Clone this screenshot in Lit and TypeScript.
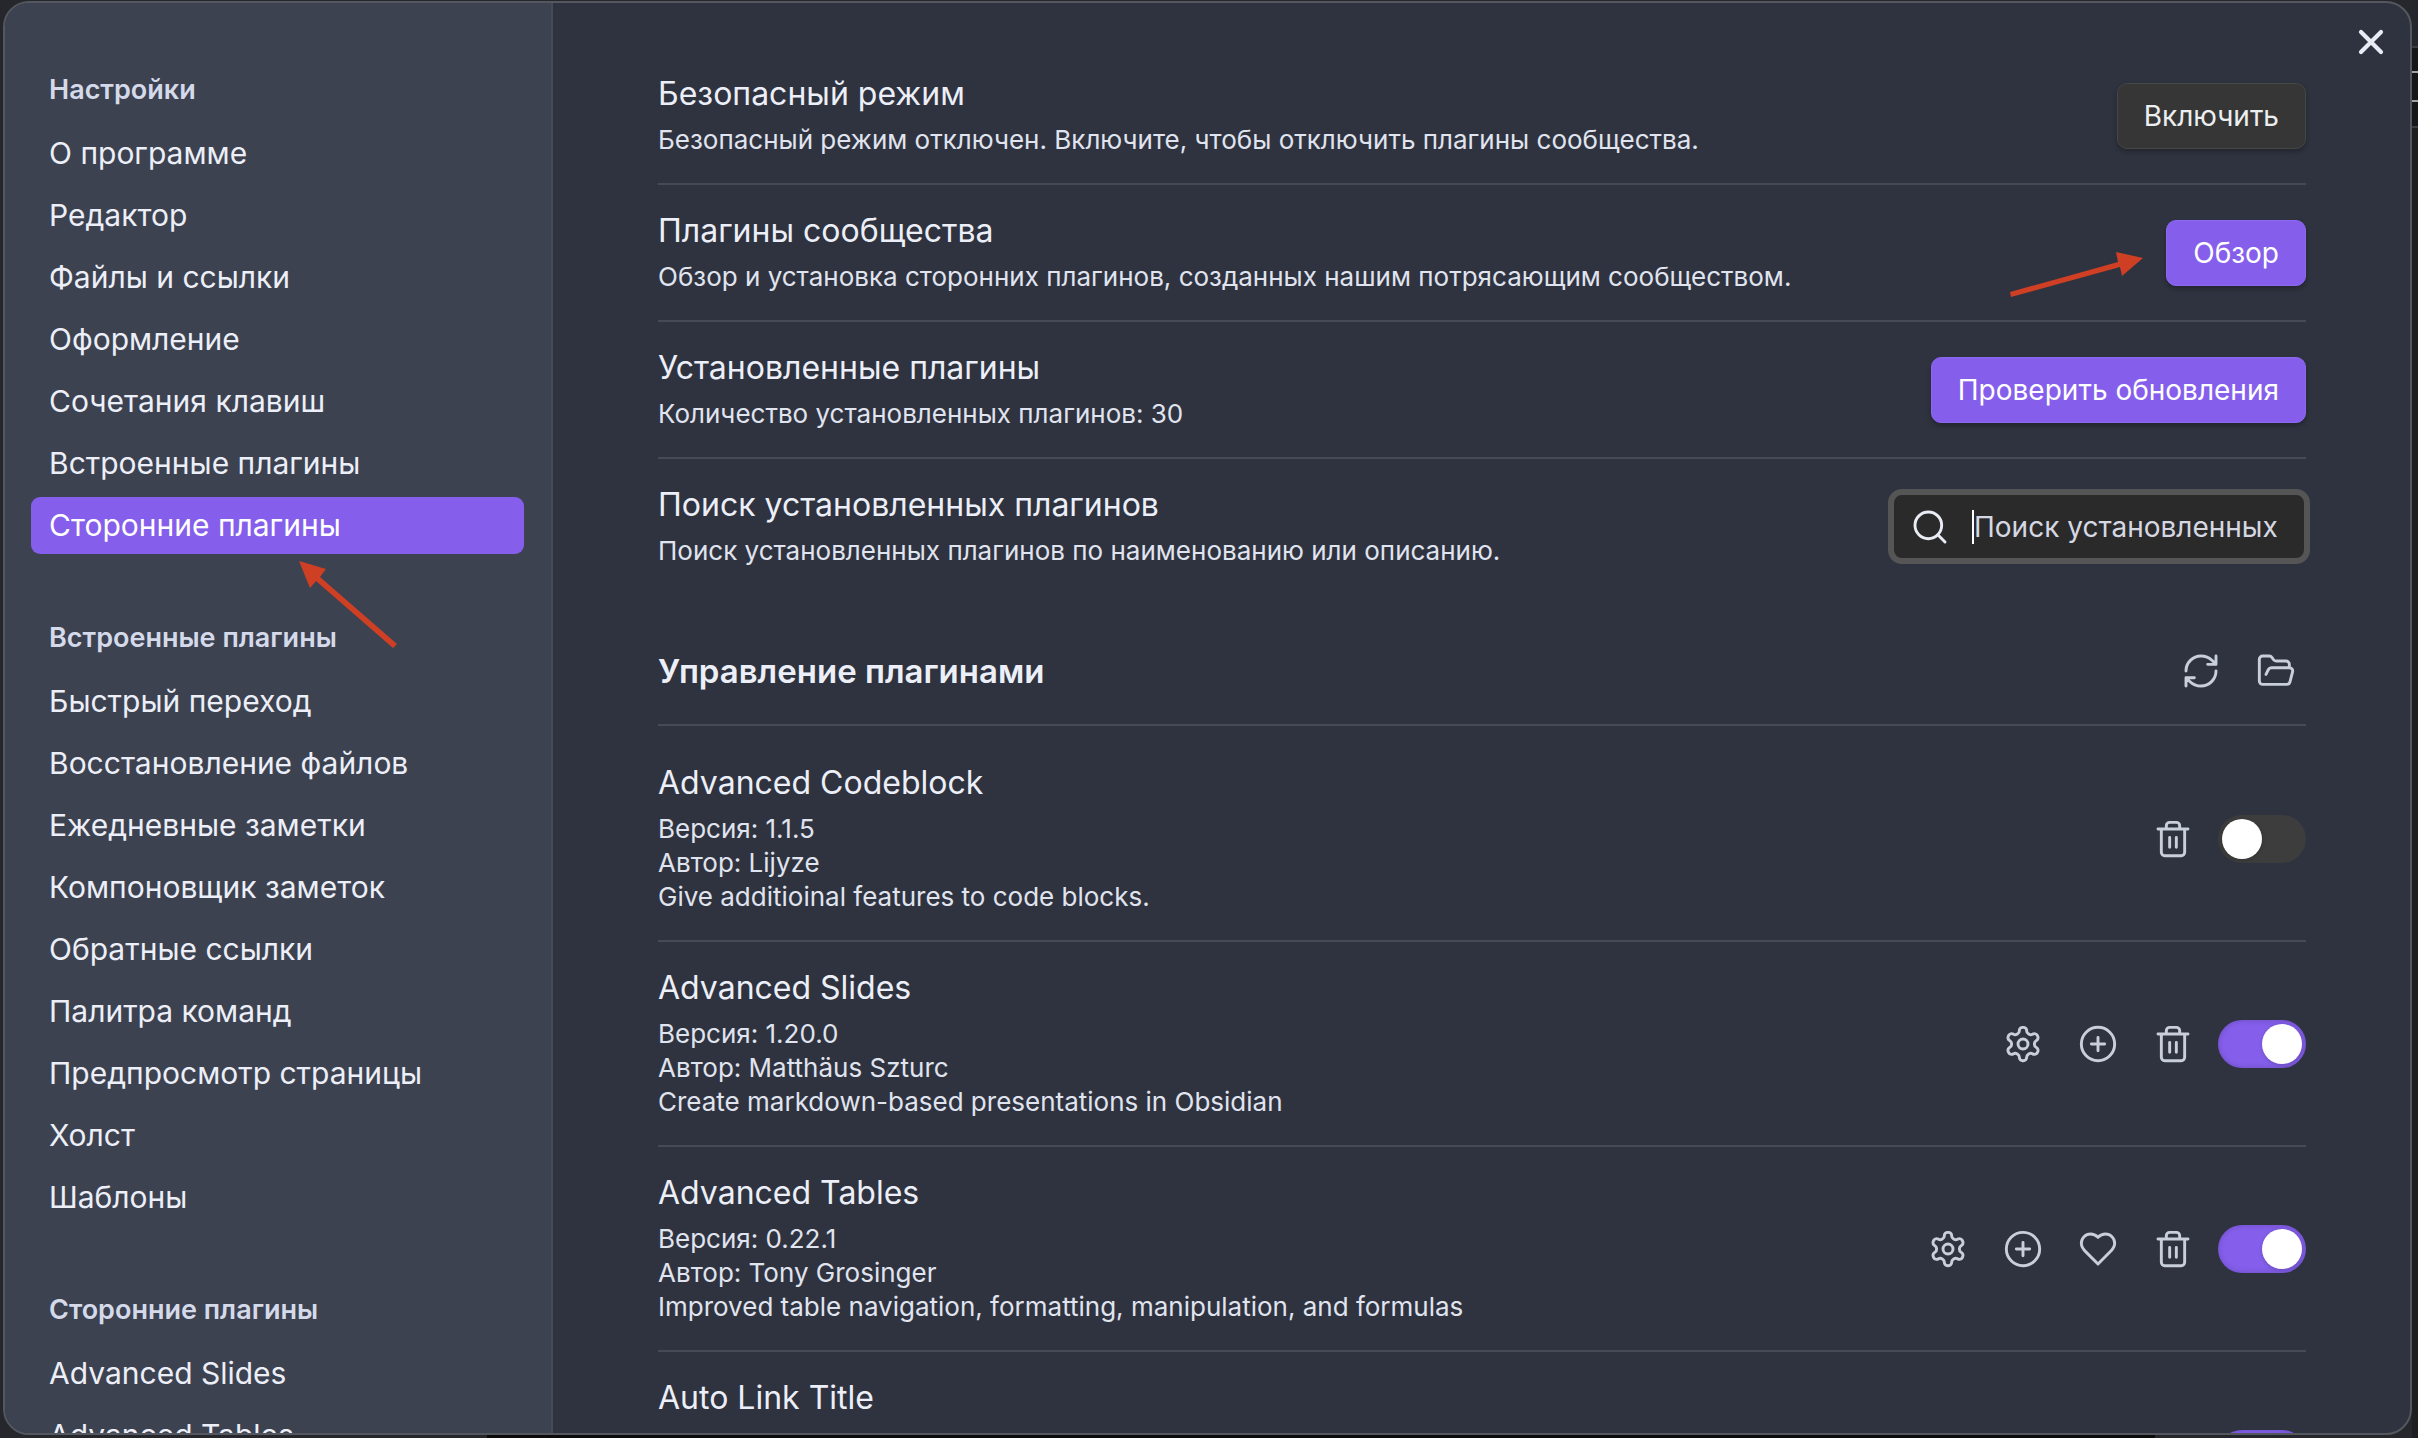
import { LitElement, html, css, svg, nothing, type TemplateResult } from "lit";
import { customElement, property, state } from "lit/decorators.js";
import { classMap } from "lit/directives/class-map.js";

const ICONS = {
  settings: svg`<path d="M12.22 2h-.44a2 2 0 0 0-2 2v.18a2 2 0 0 1-1 1.73l-.43.25a2 2 0 0 1-2 0l-.15-.08a2 2 0 0 0-2.73.73l-.22.38a2 2 0 0 0 .73 2.73l.15.1a2 2 0 0 1 1 1.72v.51a2 2 0 0 1-1 1.74l-.15.09a2 2 0 0 0-.73 2.73l.22.38a2 2 0 0 0 2.73.73l.15-.08a2 2 0 0 1 2 0l.43.25a2 2 0 0 1 1 1.73V20a2 2 0 0 0 2 2h.44a2 2 0 0 0 2-2v-.18a2 2 0 0 1 1-1.73l.43-.25a2 2 0 0 1 2 0l.15.08a2 2 0 0 0 2.73-.73l.22-.39a2 2 0 0 0-.73-2.73l-.15-.08a2 2 0 0 1-1-1.74v-.5a2 2 0 0 1 1-1.74l.15-.09a2 2 0 0 0 .73-2.73l-.22-.38a2 2 0 0 0-2.73-.73l-.15.08a2 2 0 0 1-2 0l-.43-.25a2 2 0 0 1-1-1.73V4a2 2 0 0 0-2-2z"/><circle cx="12" cy="12" r="3"/>`,
  plus: svg`<circle cx="12" cy="12" r="10"/><path d="M8 12h8M12 8v8"/>`,
  heart: svg`<path d="M19 14c1.49-1.46 3-3.21 3-5.5A5.5 5.5 0 0 0 16.5 3c-1.76 0-3 .5-4.5 2-1.5-1.5-2.74-2-4.5-2A5.5 5.5 0 0 0 2 8.5c0 2.3 1.5 4.05 3 5.5l7 7Z"/>`,
  trash: svg`<path d="M3 6h18M19 6v14a2 2 0 0 1-2 2H7a2 2 0 0 1-2-2V6M8 6V4a2 2 0 0 1 2-2h4a2 2 0 0 1 2 2v2M10 11v6M14 11v6"/>`,
  refresh: svg`<path d="M3 12a9 9 0 0 1 9-9 9.75 9.75 0 0 1 6.74 2.74L21 8M21 3v5h-5M21 12a9 9 0 0 1-9 9 9.75 9.75 0 0 1-6.74-2.74L3 16M8 16H3v5"/>`,
  folder: svg`<path d="m6 14 1.45-2.9A2 2 0 0 1 9.24 10H20a2 2 0 0 1 1.94 2.5l-1.55 6a2 2 0 0 1-1.94 1.5H4a2 2 0 0 1-2-2V5c0-1.1.9-2 2-2h3.93a2 2 0 0 1 1.66.9l.82 1.2a2 2 0 0 0 1.66.9H18a2 2 0 0 1 2 2v2"/>`,
  search: svg`<circle cx="11" cy="11" r="8"/><path d="m21 21-4.3-4.3"/>`,
  close: svg`<path d="M18 6 6 18M6 6l12 12"/>`,
};
type IconName = keyof typeof ICONS;

const icon = (name: IconName) => html`<svg
  class="icon"
  viewBox="0 0 24 24"
  fill="none"
  stroke="currentColor"
  stroke-linecap="round"
  stroke-linejoin="round"
  aria-hidden="true"
>${ICONS[name]}</svg>`;

const ACTION_LABELS: Partial<Record<IconName, string>> = {
  settings: "Настройки",
  plus: "Сочетания клавиш",
  heart: "Поддержать",
  trash: "Удалить",
  refresh: "Перезагрузить плагины",
  folder: "Открыть папку плагинов",
};

const iconStyles = css`
  .icon {
    display: block;
    width: 40px;
    height: 40px;
    stroke-width: 1.75;
  }
  .icon-button {
    display: flex;
    align-items: center;
    justify-content: center;
    width: 60px;
    height: 48px;
    padding: 0;
    border: 0;
    background: none;
    color: #c9cedb;
    cursor: pointer;
  }
`;

interface NavGroup {
  title: string;
  items: string[];
}

interface Plugin {
  name: string;
  version: string;
  author: string;
  about: string;
  actions: IconName[];
  enabled: boolean;
}

const GROUPS: NavGroup[] = [
  {
    title: "Настройки",
    items: [
      "О программе",
      "Редактор",
      "Файлы и ссылки",
      "Оформление",
      "Сочетания клавиш",
      "Встроенные плагины",
      "Сторонние плагины",
    ],
  },
  {
    title: "Встроенные плагины",
    items: [
      "Быстрый переход",
      "Восстановление файлов",
      "Ежедневные заметки",
      "Компоновщик заметок",
      "Обратные ссылки",
      "Палитра команд",
      "Предпросмотр страницы",
      "Холст",
      "Шаблоны",
    ],
  },
  { title: "Сторонние плагины", items: ["Advanced Slides", "Advanced Tables"] },
];

const PLUGINS: Plugin[] = [
  {
    name: "Advanced Codeblock",
    version: "1.1.5",
    author: "Lijyze",
    about: "Give additioinal features to code blocks.",
    actions: ["trash"],
    enabled: false,
  },
  {
    name: "Advanced Slides",
    version: "1.20.0",
    author: "Matthäus Szturc",
    about: "Create markdown-based presentations in Obsidian",
    actions: ["settings", "plus", "trash"],
    enabled: true,
  },
  {
    name: "Advanced Tables",
    version: "0.22.1",
    author: "Tony Grosinger",
    about: "Improved table navigation, formatting, manipulation, and formulas",
    actions: ["settings", "plus", "heart", "trash"],
    enabled: true,
  },
];

@customElement("settings-nav")
export class SettingsNav extends LitElement {
  @state() private current = "0:Сторонние плагины";

  static styles = css`
    :host {
      display: block;
      overflow: hidden;
      padding: 70px 27px 0 26px;
      border-right: 2px solid #474b55;
      background: #3d4251;
    }
    .group {
      margin-bottom: 67px;
    }
    .title {
      margin: 0 0 18px;
      padding: 0 18px;
      font-size: 27px;
      font-weight: 600;
      line-height: 34px;
      color: #d5daea;
    }
    .list {
      display: grid;
      gap: 5px;
      margin: 0;
      padding: 0;
      list-style: none;
    }
    .link {
      display: block;
      padding: 0 18px;
      border-radius: 9px;
      color: #eceff7;
      font-size: 30px;
      line-height: 57px;
      text-decoration: none;
      white-space: nowrap;
    }
    .link.active {
      background: #855fec;
      color: #fff;
    }
  `;

  render() {
    return html`<nav>
      ${GROUPS.map(
        (group, g) => html`<section class="group">
          <h2 class="title">${group.title}</h2>
          <ul class="list">
            ${group.items.map((item) => {
              const key = `${g}:${item}`;
              return html`<li>
                <a
                  class=${classMap({ link: true, active: key === this.current })}
                  href="#"
                  @click=${(e: Event) => {
                    e.preventDefault();
                    this.current = key;
                  }}
                  >${item}</a
                >
              </li>`;
            })}
          </ul>
        </section>`,
      )}
    </nav>`;
  }
}

@customElement("setting-row")
export class SettingRow extends LitElement {
  @property() name = "";
  @property({ attribute: false }) lines: string[] = [];

  static styles = css`
    :host {
      display: flex;
      align-items: center;
      justify-content: space-between;
      gap: 32px;
      padding: 26px 0;
      border-bottom: 2px solid #454a56;
    }
    .name {
      margin: 0 0 10px;
      font-size: 32px;
      font-weight: 400;
      line-height: 39px;
      color: #eceff7;
    }
    .line {
      min-height: 34px;
      margin: 0;
      font-size: 26px;
      line-height: 34px;
      color: #e0e4ef;
    }
    .control {
      display: flex;
      flex: none;
      align-items: center;
      gap: 15px;
      margin: -10px 0;
    }
  `;

  render() {
    return html`
      <div>
        <h3 class="name">${this.name}</h3>
        ${this.lines.map((line) => html`<p class="line">${line}</p>`)}
      </div>
      <div class="control"><slot></slot></div>
    `;
  }
}

@customElement("app-root")
export class AppRoot extends LitElement {
  static styles = [
    iconStyles,
    css`
      :host {
        display: block;
        box-sizing: border-box;
        height: 100vh;
        padding: 1px 6px 3px 3px;
        overflow: hidden;
        background:
          linear-gradient(#0b0b0c, #0b0b0c) 65% 100% / 69% 3px no-repeat,
          linear-gradient(
              #23262d 46px, #3a3c42 46px 48px, #151619 48px 71px, #a0a2a6 71px 73px,
              #151619 73px 100px, #a0a2a6 100px 102px, #151619 102px 126px, #3a3c42 126px 128px, #1c1e22 128px
            )
            100% 0 / 6px 100% no-repeat,
          #25272d;
        font-family: Inter, "Liberation Sans", sans-serif;
      }
      * {
        box-sizing: border-box;
      }
      .modal {
        position: relative;
        display: grid;
        grid-template-columns: 548px 1fr;
        grid-template-rows: 100%;
        height: 100%;
        overflow: hidden;
        border: 2px solid #54575d;
        border-radius: 26px;
        background: #2f333f;
      }
      .content {
        padding: 45px 104px 0 105px;
        overflow: hidden;
      }
      .close {
        position: absolute;
        top: 15px;
        right: 9px;
        color: #e9ecf5;
      }
      .close .icon {
        stroke-width: 2.5;
      }
      .button {
        height: 66px;
        padding: 0 26px;
        border: 1px solid #454646;
        border-radius: 10px;
        background: #363636;
        box-shadow: 0 3px 5px #0004;
        color: #eceff0;
        font: 400 28px/40px Inter, "Liberation Sans", sans-serif;
      }
      .button.primary {
        border-color: #8c68f0;
        background: #855fec;
        color: #fff;
      }
      .pointed {
        position: relative;
      }
      .arrow {
        position: absolute;
        overflow: visible;
        pointer-events: none;
        fill: #cf3f24;
      }
      .arrow-button {
        top: 67px;
        right: 162px;
        width: 134px;
        height: 46px;
      }
      .arrow-nav {
        top: 558px;
        left: 294px;
        width: 98px;
        height: 86px;
      }
      .search {
        display: flex;
        align-items: center;
        gap: 22px;
        width: 422px;
        height: 75px;
        margin-right: -4px;
        padding: 0 12px 0 16px;
        border: 6px solid #555;
        border-radius: 14px;
        background: #2a2a2a;
        color: #e9ecf5;
      }
      .search .icon {
        flex: none;
      }
      .search-input {
        flex: 1;
        min-width: 0;
        height: 34px;
        padding: 0;
        border: 0;
        border-left: 2px solid #fff;
        outline: 0;
        background: none;
        color: #d5d8e2;
        font: 400 28px/34px Inter, "Liberation Sans", sans-serif;
      }
      .search-input::placeholder {
        color: #d5d8e2;
      }
      .last {
        border-bottom-color: transparent;
      }
      .heading {
        display: flex;
        align-items: center;
        justify-content: space-between;
        height: 108px;
        margin: 22px 0 11px;
        border-bottom: 2px solid #454a56;
      }
      .heading-title {
        margin: 0;
        color: #eceff7;
        font-size: 33px;
        font-weight: 600;
        line-height: 39px;
      }
      .heading-actions {
        display: flex;
        gap: 15px;
      }
      .toggle {
        width: 88px;
        height: 48px;
        margin: 0;
        padding: 4px;
        appearance: none;
        border-radius: 24px;
        background: #3d3d3d;
        cursor: pointer;
      }
      .toggle::before {
        content: "";
        display: block;
        width: 40px;
        height: 40px;
        border-radius: 50%;
        background: #fff;
        box-shadow: 0 1px 4px #0003;
      }
      .toggle:checked {
        background: #855fec;
        box-shadow: inset 0 0 6px #0003;
      }
      .toggle:checked::before {
        margin-left: auto;
      }
    `,
  ];

  private action(name: IconName): TemplateResult {
    return html`<button class="icon-button" aria-label=${ACTION_LABELS[name] ?? nothing}>${icon(name)}</button>`;
  }

  render() {
    return html`<div class="modal" role="dialog">
      <settings-nav></settings-nav>
      <main class="content">
        <setting-row
          name="Безопасный режим"
          .lines=${["Безопасный режим отключен. Включите, чтобы отключить плагины сообщества."]}
        >
          <button class="button">Включить</button>
        </setting-row>
        <setting-row
          class="pointed"
          name="Плагины сообщества"
          .lines=${["Обзор и установка сторонних плагинов, созданных нашим потрясающим сообществом."]}
        >
          <button class="button primary">Обзор</button>
          <svg class="arrow arrow-button" viewBox="0 0 134 46" aria-hidden="true">
            <path d="M133 6 L106 0 L108 10 L0 40 L1 45 L110 15 L112 24 Z" />
          </svg>
        </setting-row>
        <setting-row name="Установленные плагины" .lines=${["Количество установленных плагинов: 30"]}>
          <button class="button primary">Проверить обновления</button>
        </setting-row>
        <setting-row
          class="last"
          name="Поиск установленных плагинов"
          .lines=${["Поиск установленных плагинов по наименованию или описанию."]}
        >
          <label class="search">
            ${icon("search")}
            <input
              class="search-input"
              type="text"
              aria-label="Поиск установленных плагинов"
              placeholder="Поиск установленных"
            />
          </label>
        </setting-row>
        <header class="heading">
          <h2 class="heading-title">Управление плагинами</h2>
          <div class="heading-actions">${this.action("refresh")}${this.action("folder")}</div>
        </header>
        ${PLUGINS.map(
          (p) => html`<setting-row
            name=${p.name}
            .lines=${[`Версия: ${p.version}`, `Автор: ${p.author}`, p.about]}
          >
            ${p.actions.map((a) => this.action(a))}
            <input class="toggle" type="checkbox" role="switch" aria-label=${p.name} .checked=${p.enabled} />
          </setting-row>`,
        )}
        <setting-row name="Auto Link Title" .lines=${["", "", ""]}>
          ${this.action("trash")}
          <input class="toggle" type="checkbox" role="switch" aria-label="Auto Link Title" .checked=${true} />
        </setting-row>
      </main>
      <button class="icon-button close" aria-label="Закрыть">${icon("close")}</button>
      <svg class="arrow arrow-nav" viewBox="0 0 98 86" aria-hidden="true">
        <path d="M0 0 L27 8 L21 16 L98 83 L94 87 L17 20 L11 27 Z" />
      </svg>
    </div>`;
  }
}
